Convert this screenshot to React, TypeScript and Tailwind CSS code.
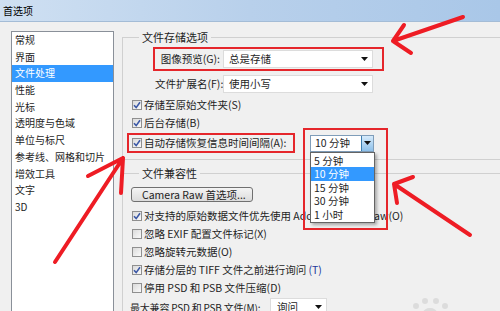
import React from "react";

const font = "font-['Noto_Sans_CJK_SC',sans-serif]";

const Check = ({ on }: { on?: boolean }) => (
  <span className="w-[10px] h-[10px] shrink-0 border border-[#8f8f8f] bg-linear-to-br from-[#dadada] to-[#fafafa] flex items-center justify-center">
    {on && (
      <svg width="8" height="8" viewBox="0 0 8 8">
        <path d="M1 4.2 L3.2 6.6 L7 1.2" fill="none" stroke="#3b58a6" strokeWidth="1.6" />
      </svg>
    )}
  </span>
);

const Caret = () => (
  <svg width="7" height="4" viewBox="0 0 7 4" className="shrink-0">
    <path d="M0 0 H7 L3.5 4 Z" fill="#111" />
  </svg>
);

const Select = ({ value, className }: { value: string; className: string }) => (
  <div className={`h-[18px] shrink-0 bg-white border border-[#dcdcdc] flex items-center justify-between pr-[4px] ${className}`}>
    <span>{value}</span>
    <Caret />
  </div>
);

const CheckRow = ({ on, children }: { on?: boolean; children: React.ReactNode }) => (
  <div className="h-[18px] ml-[9px] flex items-center gap-[2px] whitespace-nowrap">
    <Check on={on} />
    <span>{children}</span>
  </div>
);

const sections = ["常规", "界面", "文件处理", "性能", "光标", "透明度与色域", "单位与标尺", "参考线、网格和切片", "增效工具", "文字", "3D"];

export default function App() {
  return (
    <div className={`relative w-[500px] h-[311px] overflow-hidden bg-[#f0f0f0] text-[#1e1e1e] ${font}`}>
      <div className="h-[22px] px-[3px] flex items-center text-[10px] text-black bg-linear-to-r from-[#cfe0f2] via-[#b8d0eb] to-[#a9c7e8] border-b border-[#a4bcd6]">
        首选项
      </div>

      <div className="flex">
        <div className="mt-[9px] ml-[11px] w-[103px] h-[290px] shrink-0 bg-white border border-[#8a9099] text-[10px]">
          {sections.map((s, i) => (
            <div
              key={s}
              className={`h-[16.7px] leading-[16.7px] pl-[3px] ${i === 2 ? "bg-[#3399ff] text-white" : ""}`}
            >
              {s}
            </div>
          ))}
        </div>

        <div className="flex-1 min-w-0 ml-[8px] pt-[7px] text-[10.5px]">
          <fieldset className="border border-r-0 border-[#d0d0d0] pb-[6px]">
            <legend className="ml-[16px] px-[3px] text-[11px] leading-[16px]">文件存储选项</legend>

            <div className="mt-[2px] ml-[30px] w-[231px] h-[24px] border-2 border-[#e5262b] flex items-center">
              <span className="w-[65px] text-right whitespace-nowrap">图像预览(G):</span>
              <Select value="总是存储" className="ml-[3px] w-[150px] pl-[5px]" />
            </div>

            <div className="mt-[4px] ml-[32px] h-[18px] flex items-center">
              <span className="w-[65px] text-right whitespace-nowrap">文件扩展名(F):</span>
              <Select value="使用小写" className="ml-[3px] w-[150px] pl-[5px]" />
            </div>

            <div className="mt-[3px]">
              <CheckRow on>存储至原始文件夹(S)</CheckRow>
              <CheckRow on>后台存储(B)</CheckRow>
            </div>

            <div className="mt-[1px] ml-[4px] flex items-center">
              <div className="w-[168px] h-[20px] border-2 border-[#e5262b] pl-[3px] flex items-center gap-[2px] whitespace-nowrap">
                <Check on />
                <span>自动存储恢复信息时间间隔(A):</span>
              </div>
              <div className="relative ml-[15px]">
                <div className="w-[64px] h-[17px] bg-white border border-[#7f9db9] flex items-center">
                  <span className="flex-1 pl-[4px]">10 分钟</span>
                  <span className="w-[12px] h-full bg-linear-to-b from-[#d6ebfb] to-[#8dc0ea] border-l border-[#3c7fb1] flex items-center justify-center">
                    <Caret />
                  </span>
                </div>
                <div className="absolute z-10 left-0 top-[17px] w-[65px] bg-white border border-[#646464] shadow-[2px_2px_3px_rgba(0,0,0,0.3)] pt-[1px] pb-[1px]">
                  {["5 分钟", "10 分钟", "15 分钟", "30 分钟", "1 小时"].map((t, i) => (
                    <div
                      key={t}
                      className={`h-[13.5px] leading-[13.5px] pl-[3px] ${i === 1 ? "bg-[#3399ff] text-white" : ""}`}
                    >
                      {t}
                    </div>
                  ))}
                </div>
                <div className="absolute z-20 -left-[7px] -top-[7px] w-[85px] h-[102px] border-2 border-[#e5262b]" />
              </div>
            </div>
          </fieldset>

          <fieldset className="mt-[5px] border border-r-0 border-b-0 border-[#d0d0d0]">
            <legend className="ml-[16px] px-[3px] text-[11px] leading-[16px]">文件兼容性</legend>

            <div className="mt-[6px] ml-[8px] w-[122px] h-[15px] rounded-[3px] border border-[#707070] bg-linear-to-b from-[#f4f4f4] to-[#dcdcdc] flex items-center pl-[10px] whitespace-nowrap">
              Camera Raw 首选项...
            </div>

            <div className="mt-[5px]">
              <CheckRow on>对支持的原始数据文件优先使用 Adobe Camera Raw(O)</CheckRow>
              <CheckRow>忽略 EXIF 配置文件标记(X)</CheckRow>
              <CheckRow>忽略旋转元数据(O)</CheckRow>
              <CheckRow on>
                存储分层的 TIFF 文件之前进行询问 <span className="text-[#23399a]">(T)</span>
              </CheckRow>
              <CheckRow>停用 PSD 和 PSB 文件压缩(D)</CheckRow>
            </div>

            <div className="mt-[1px] ml-[7px] h-[18px] flex items-center whitespace-nowrap">
              <span className="w-[137px] text-[10px] tracking-[-0.2px]">最大兼容 PSD 和 PSB 文件(M):</span>
              <Select value="询问" className="ml-[3px] w-[57px] pl-[6px]" />
            </div>
          </fieldset>
        </div>
      </div>

      <svg className="absolute inset-0 z-30 pointer-events-none" width="500" height="311" viewBox="0 0 500 311">
        <g fill="#dcdcdc">
          <circle cx="416" cy="306" r="3" />
          <circle cx="425" cy="301" r="3" />
          <circle cx="436" cy="301" r="3" />
          <circle cx="445" cy="306" r="3" />
          <ellipse cx="430" cy="313" rx="7" ry="5" />
        </g>
        <g fill="none" stroke="#ee1c24" strokeWidth="4" strokeLinecap="round" strokeLinejoin="round">
          <path d="M463 17 L393 41 M404 25 L393 41 L411 53" />
          <path d="M55 262 L123 158 M88 176 L123 158 L121 193" />
          <path d="M470 235 L394 184 M413 177 L394 184 L397 203" />
        </g>
      </svg>
    </div>
  );
}
